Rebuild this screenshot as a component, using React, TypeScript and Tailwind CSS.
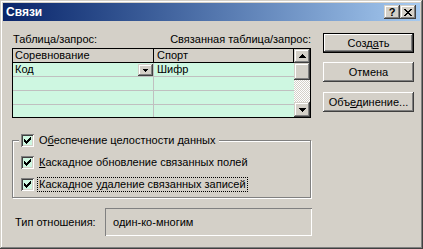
const pushBtn =
  "shadow-[inset_-1px_-1px_#404040,inset_1px_1px_#ffffff,inset_-2px_-2px_#808080]";
const sbBtn =
  "shadow-[inset_-1px_-1px_#404040,inset_1px_1px_#d4d0c8,inset_-2px_-2px_#808080,inset_2px_2px_#ffffff]";

function UpArrow() {
  return (
    <svg width="7" height="4" viewBox="0 0 7 4" shapeRendering="crispEdges">
      <path d="M3 0h1v1H3z M2 1h3v1H2z M1 2h5v1H1z M0 3h7v1H0z" fill="#000" />
    </svg>
  );
}

function DownArrow() {
  return (
    <svg width="7" height="4" viewBox="0 0 7 4" shapeRendering="crispEdges">
      <path d="M0 0h7v1H0z M1 1h5v1H1z M2 2h3v1H2z M3 3h1v1H3z" fill="#000" />
    </svg>
  );
}

function Check() {
  return (
    <span className="w-[13px] h-[13px] flex items-center justify-center bg-[#cef7e1] shadow-[inset_1px_1px_#808080,inset_-1px_-1px_#ffffff,inset_2px_2px_#404040,inset_-2px_-2px_#d4d0c8]">
      <svg width="7" height="7" viewBox="0 0 7 7" shapeRendering="crispEdges">
        <path
          d="M0 2h1v3H0z M1 3h1v3H1z M2 4h1v3H2z M3 3h1v3H3z M4 2h1v3H4z M5 1h1v3H5z M6 0h1v3H6z"
          fill="#000"
        />
      </svg>
    </span>
  );
}

function Row({ children, last }: { children?: React.ReactNode; last?: boolean }) {
  return (
    <div
      className={
        last
          ? "h-[12px] flex bg-[#cef7e1]"
          : "h-[14px] flex bg-[#cef7e1] border-b border-[#c0c0c0]"
      }
    >
      {children ?? (
        <>
          <div className="w-[141px] border-r border-[#c0c0c0]" />
          <div className="w-[140px]" />
        </>
      )}
    </div>
  );
}

export default function App() {
  return (
    <div className="w-[423px] h-[249px] bg-[#d4d0c8] p-[3px] flex flex-col font-['Liberation_Sans',Arial,sans-serif] text-[11px] leading-[13px] text-black select-none shadow-[inset_-1px_-1px_#404040,inset_1px_1px_#d4d0c8,inset_-2px_-2px_#808080,inset_2px_2px_#ffffff]">
      {/* title bar */}
      <div className="h-[18px] flex items-center bg-linear-to-r from-[#0a246a] to-[#a6caf0] pl-[3px] pr-[4px]">
        <span className="flex-1 text-white font-bold text-[12px] leading-[14px]">Связи</span>
        <div className="flex">
          <div className={`w-[16px] h-[14px] bg-[#d4d0c8] flex items-center justify-center font-bold text-[11px] ${sbBtn}`}>
            ?
          </div>
          <div className={`w-[16px] h-[14px] bg-[#d4d0c8] flex items-center justify-center ${sbBtn}`}>
            <svg width="8" height="7" viewBox="0 0 8 7" shapeRendering="crispEdges">
              <path
                d="M0 0h2v1H0z M6 0h2v1H6z M1 1h2v1H1z M5 1h2v1H5z M2 2h4v1H2z M3 3h2v1H3z M2 4h4v1H2z M1 5h2v1H1z M5 5h2v1H5z M0 6h2v1H0z M6 6h2v1H6z"
                fill="#000"
              />
            </svg>
          </div>
        </div>
      </div>

      {/* tables + buttons */}
      <div className="flex items-start pl-[9px] pt-[11px]">
        <div className="w-[299px] flex flex-col">
          <div className="h-[14px] flex items-center justify-between leading-[14px]">
            <span className="pl-[1px]">Таблица/запрос:</span>
            <span>Связанная таблица/запрос:</span>
          </div>
          <div className="mt-[2px] w-[299px] h-[70px] border border-black flex">
            <div className="w-[281px] flex flex-col">
              <div className="h-[14px] flex border-b border-black bg-[#d4d0c8]">
                <div className="w-[141px] border-r border-black pl-[2px]">Соревнование</div>
                <div className="w-[140px] border-r border-black pl-[3px]">Спорт</div>
              </div>
              <Row>
                <div className="w-[141px] border-r border-[#c0c0c0] pl-[2px] flex items-start justify-between">
                  <span>Код</span>
                  <span className={`mt-[1px] w-[15px] h-[12px] bg-[#d4d0c8] flex items-center justify-center ${sbBtn}`}>
                    <svg width="5" height="3" viewBox="0 0 5 3" shapeRendering="crispEdges">
                      <path d="M0 0h5v1H0z M1 1h3v1H1z M2 2h1v1H2z" fill="#000" />
                    </svg>
                  </span>
                </div>
                <div className="w-[140px] pl-[3px]">Шифр</div>
              </Row>
              <Row />
              <Row />
              <Row last />
            </div>
            <div className="w-[16px] flex flex-col">
              <div className={`h-[14px] bg-[#d4d0c8] flex items-center justify-center ${sbBtn}`}>
                <UpArrow />
              </div>
              <div className={`h-[17px] bg-[#d4d0c8] ${sbBtn}`} />
              <div className="h-[22px] [background:repeating-conic-gradient(#ffffff_0%_25%,#d4d0c8_0%_50%)_0_0/2px_2px]" />
              <div className={`h-[15px] bg-[#d4d0c8] flex items-center justify-center ${sbBtn}`}>
                <DownArrow />
              </div>
            </div>
          </div>
        </div>

        <div className="ml-[12px] mt-[1px] flex flex-col">
          <button className={`w-[91px] h-[20px] bg-[#d4d0c8] border border-black ${pushBtn}`}>
            Созд<u>а</u>ть
          </button>
          <button className={`mt-[9px] w-[91px] h-[20px] bg-[#d4d0c8] ${pushBtn}`}>Отмена</button>
          <button className={`mt-[10px] w-[91px] h-[20px] bg-[#d4d0c8] ${pushBtn}`}>
            Объ<u>е</u>динение...
          </button>
        </div>
      </div>

      {/* referential integrity group */}
      <fieldset className="ml-[9px] mt-[15px] w-[299px] border border-[#808080] pl-[8px] pb-[6px] shadow-[1px_1px_0_#ffffff,inset_1px_1px_0_#ffffff]">
        <legend className="ml-[-2px] px-[2px] h-[14px] bg-[#d4d0c8]">
          <span className="h-[14px] flex items-center">
            <Check />
            <span className="ml-[3px] border border-transparent px-[1px]">
              О<u>б</u>еспечение целостности данных
            </span>
          </span>
        </legend>
        <div className="mt-[9px] h-[13px] flex items-center">
          <Check />
          <span className="ml-[3px] border border-transparent px-[1px]">
            <u>К</u>аскадное обновление связанных полей
          </span>
        </div>
        <div className="mt-[9px] h-[13px] flex items-center">
          <Check />
          <span className="ml-[3px] border border-dotted border-black px-[1px]">
            Каскадное <u>у</u>даление связанных записей
          </span>
        </div>
      </fieldset>

      {/* relationship type */}
      <div className="ml-[9px] mt-[10px] flex items-center">
        <span className="w-[93px] pl-[3px]">Тип отношения:</span>
        <div className="w-[207px] h-[28px] flex items-center pl-[8px] shadow-[inset_1px_1px_#808080,inset_-1px_-1px_#ffffff]">
          один-ко-многим
        </div>
      </div>
    </div>
  );
}
